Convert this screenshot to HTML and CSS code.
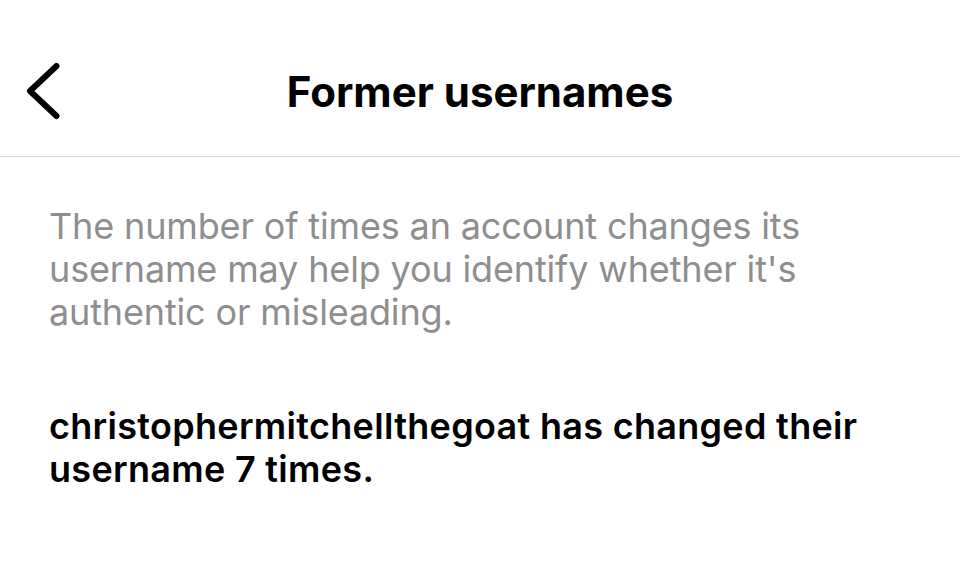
FILE: index.html
```html
<!DOCTYPE html>
<html>
<head>
<meta charset="utf-8">
<link rel="stylesheet" href="styles.css">
</head>
<body>
<div class="page">
  <header class="topbar">
    <button class="back" aria-label="Back">
      <svg width="40" height="62" viewBox="0 0 40 62"><path d="M31.5 6 L5 31 L31.5 56" fill="none" stroke="#000" stroke-width="6" stroke-linecap="round" stroke-linejoin="round"/></svg>
    </button>
    <h1 class="title">Former usernames</h1>
  </header>
  <main class="content">
    <p class="info">The number of times an account changes its username may help you identify whether it's authentic or misleading.</p>
    <p class="count">christophermitchellthegoat has changed their username 7 times.</p>
  </main>
</div>
</body>
</html>
```
FILE: styles.css
```css
* { box-sizing: border-box; }
html, body { margin: 0; padding: 0; background: #fff; }
body { font-family: Inter, "Noto Sans", sans-serif; color: #000; }
.page { width: 960px; height: 570px; overflow: hidden; }
.topbar {
  height: 157px;
  border-bottom: 1.5px solid #dbdbdb;
  display: grid;
  grid-template-columns: 1fr auto 1fr;
  align-items: center;
  padding: 60px 0 46px;
}
.back {
  justify-self: start;
  margin-left: 25px;
  padding: 0;
  border: 0;
  background: none;
  display: flex;
}
.title {
  margin: 0;
  font-size: 42px;
  font-weight: 700;
  letter-spacing: 0;
}
.content { padding: 0 49px; }
.info {
  margin: 48px 0 0;
  font-size: 36px;
  line-height: 43px;
  color: #8e8e8e;
  letter-spacing: -0.15px;
}
.count {
  margin: 71px 0 0;
  font-size: 36px;
  line-height: 43px;
  font-weight: 600;
  letter-spacing: 0.3px;
}
```
